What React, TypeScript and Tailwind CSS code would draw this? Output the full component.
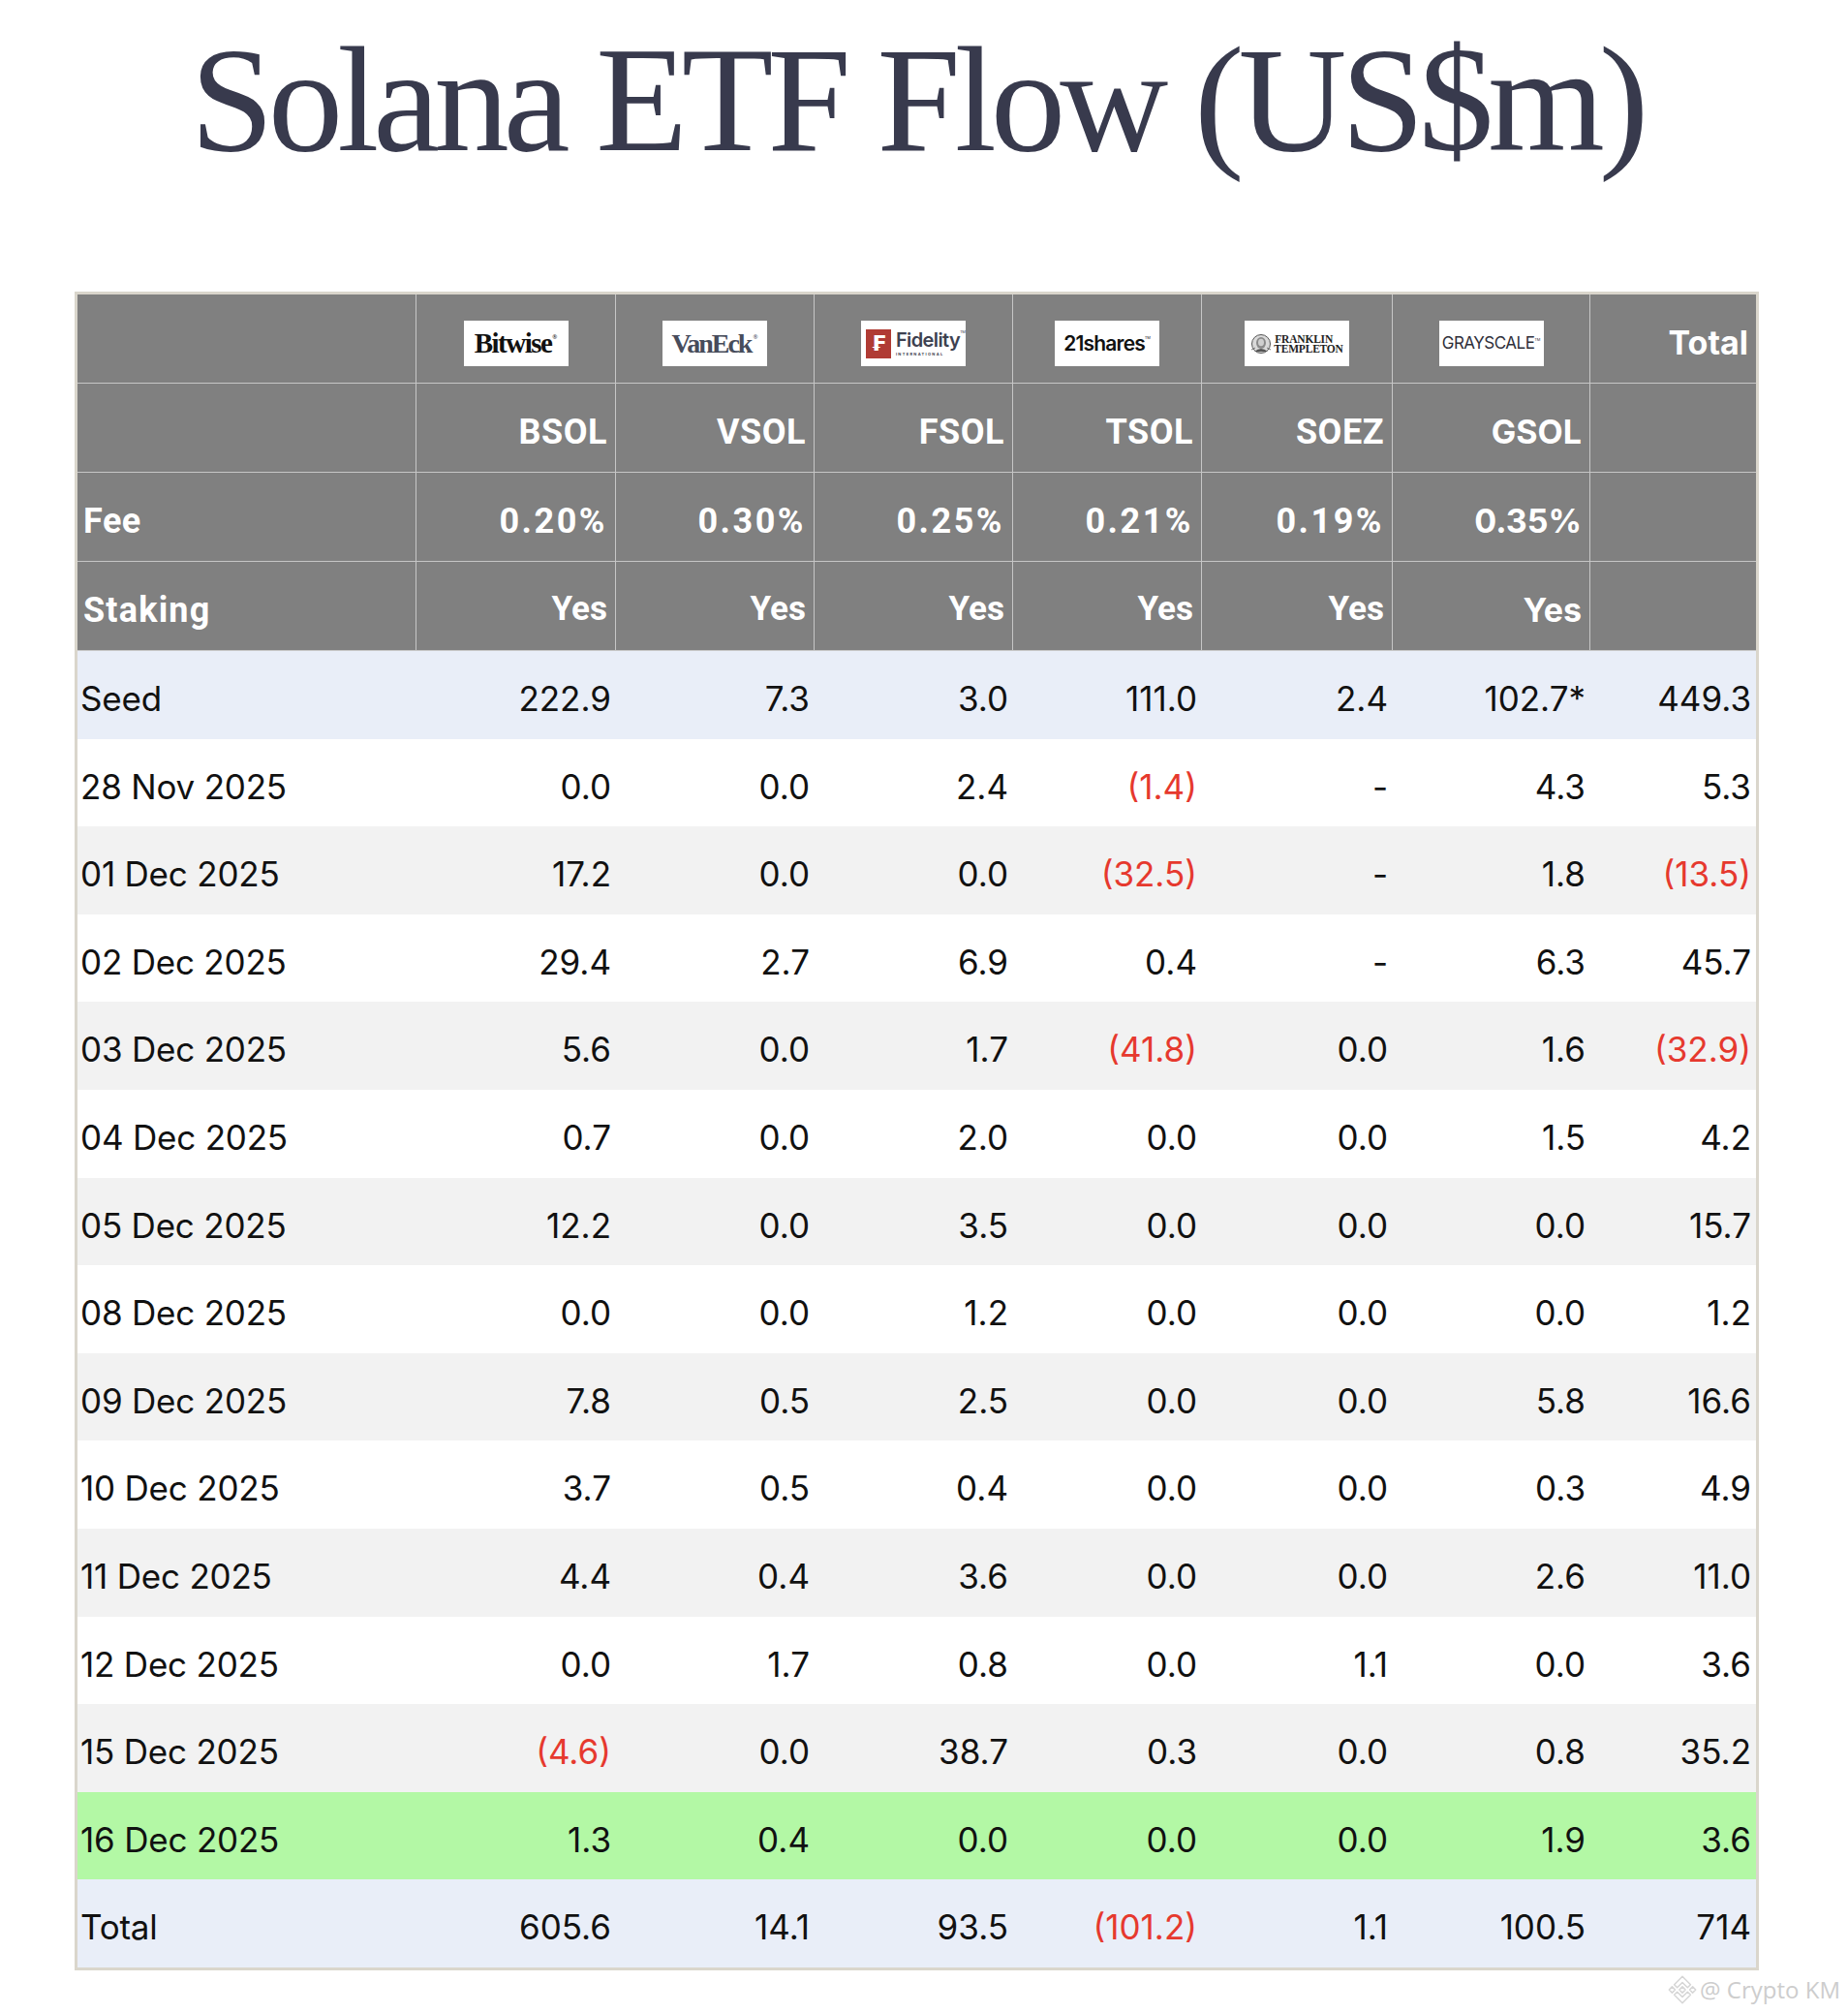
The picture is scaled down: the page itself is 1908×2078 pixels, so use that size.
import React from 'react';

type Cell = string;

const GRID = 'grid grid-cols-[350px_206px_205px_205px_195px_197px_204px_171px]';

const rows: { label: string; bg: string; values: Cell[] }[] = [
  { label: 'Seed', bg: 'bg-[#e9eef8]', values: ['222.9', '7.3', '3.0', '111.0', '2.4', '102.7*', '449.3'] },
  { label: '28 Nov 2025', bg: 'bg-white', values: ['0.0', '0.0', '2.4', '(1.4)', '-', '4.3', '5.3'] },
  { label: '01 Dec 2025', bg: 'bg-[#f2f2f2]', values: ['17.2', '0.0', '0.0', '(32.5)', '-', '1.8', '(13.5)'] },
  { label: '02 Dec 2025', bg: 'bg-white', values: ['29.4', '2.7', '6.9', '0.4', '-', '6.3', '45.7'] },
  { label: '03 Dec 2025', bg: 'bg-[#f2f2f2]', values: ['5.6', '0.0', '1.7', '(41.8)', '0.0', '1.6', '(32.9)'] },
  { label: '04 Dec 2025', bg: 'bg-white', values: ['0.7', '0.0', '2.0', '0.0', '0.0', '1.5', '4.2'] },
  { label: '05 Dec 2025', bg: 'bg-[#f2f2f2]', values: ['12.2', '0.0', '3.5', '0.0', '0.0', '0.0', '15.7'] },
  { label: '08 Dec 2025', bg: 'bg-white', values: ['0.0', '0.0', '1.2', '0.0', '0.0', '0.0', '1.2'] },
  { label: '09 Dec 2025', bg: 'bg-[#f2f2f2]', values: ['7.8', '0.5', '2.5', '0.0', '0.0', '5.8', '16.6'] },
  { label: '10 Dec 2025', bg: 'bg-white', values: ['3.7', '0.5', '0.4', '0.0', '0.0', '0.3', '4.9'] },
  { label: '11 Dec 2025', bg: 'bg-[#f2f2f2]', values: ['4.4', '0.4', '3.6', '0.0', '0.0', '2.6', '11.0'] },
  { label: '12 Dec 2025', bg: 'bg-white', values: ['0.0', '1.7', '0.8', '0.0', '1.1', '0.0', '3.6'] },
  { label: '15 Dec 2025', bg: 'bg-[#f2f2f2]', values: ['(4.6)', '0.0', '38.7', '0.3', '0.0', '0.8', '35.2'] },
  { label: '16 Dec 2025', bg: 'bg-[#b3f8a5]', values: ['1.3', '0.4', '0.0', '0.0', '0.0', '1.9', '3.6'] },
  { label: 'Total', bg: 'bg-[#e9eef8]', values: ['605.6', '14.1', '93.5', '(101.2)', '1.1', '100.5', '714'] },
];

const tickers = ['BSOL', 'VSOL', 'FSOL', 'TSOL', 'SOEZ', 'GSOL'];
const fees = ['0.20%', '0.30%', '0.25%', '0.21%', '0.19%', '0.35%'];

// header cell, last column has no right rule
function H({
  children,
  last,
  left,
  sf,
  tw = 'text-[35px]',
}: {
  children?: React.ReactNode;
  last?: boolean;
  left?: boolean;
  sf?: boolean;
  tw?: string;
}) {
  return (
    <div
      className={`flex h-[92px] items-center border-b border-[#c6c6c6] pt-2 font-bold text-white ${last ? '' : 'border-r'} ${left ? 'justify-start pl-[6px]' : 'justify-end pr-2'} ${sf ? "font-['Inter',sans-serif] text-[34px]" : `font-['Roboto',sans-serif] ${tw}`}`}
    >
      {children}
    </div>
  );
}

function LogoBox({ children }: { children: React.ReactNode }) {
  return <div className="flex h-[47px] w-[108px] items-center justify-center bg-white">{children}</div>;
}

function Bitwise() {
  return (
    <LogoBox>
      <span className="font-['Liberation_Serif',serif] text-[29px] font-bold leading-none tracking-[-1.5px] text-[#111]">Bitwise</span>
      <span className="mb-3 ml-[1px] text-[6px] text-[#111]">®</span>
    </LogoBox>
  );
}

function VanEck() {
  return (
    <LogoBox>
      <span className="font-['Liberation_Serif',serif] text-[28px] font-bold leading-none tracking-[-2px] text-[#474c5b]">VanEck</span>
      <span className="mb-3 ml-[2px] text-[6px] text-[#474c5b]">®</span>
    </LogoBox>
  );
}

function Fidelity() {
  return (
    <div className="flex h-[47px] w-[108px] items-center bg-white pl-[5px]">
      <div className="flex h-[30px] w-[29px] items-center justify-center bg-[#b03b34]">
        <span className="font-['DejaVu_Sans',sans-serif] text-[22px] font-bold leading-none text-white">₣</span>
      </div>
      <div className="ml-[5px] flex flex-col items-start">
        <div className="flex items-start">
          <span className="font-['Inter',sans-serif] text-[20px] font-semibold leading-none tracking-[-0.6px] text-[#3d4150]">Fidelity</span>
          <span className="text-[4px] leading-none text-[#3d4150]">TM</span>
        </div>
        <span className="mt-[3px] font-['Inter',sans-serif] text-[4px] font-bold leading-none tracking-[1.3px] text-[#3d4150]">INTERNATIONAL</span>
      </div>
    </div>
  );
}

function TwentyOne() {
  return (
    <LogoBox>
      <span className="font-['Inter',sans-serif] text-[21px] font-semibold leading-none tracking-[-0.8px] text-[#111]">21shares</span>
      <span className="mb-3 text-[4px] text-[#111]">TM</span>
    </LogoBox>
  );
}

function Franklin() {
  return (
    <LogoBox>
      <svg width="22" height="22" viewBox="0 0 22 22" className="mr-[2px]">
        <circle cx="11" cy="11" r="9.5" fill="#d9d9d9" stroke="#555" strokeWidth="1" />
        <ellipse cx="11" cy="10" rx="5" ry="6" fill="#8a8a8a" />
        <ellipse cx="11" cy="9.5" rx="3" ry="3.8" fill="#cfcfcf" />
        <path d="M4 19 Q11 13 18 19" fill="#555" />
        <path d="M1 17 L5 15 M17 15 L21 17" stroke="#777" strokeWidth="1" />
      </svg>
      <div className="flex flex-col font-['Liberation_Serif',serif] text-[11.5px] font-bold leading-[10px] tracking-[-0.2px] text-[#222]">
        <span className="pl-[1px]">FRANKLIN</span>
        <span>TEMPLETON</span>
      </div>
    </LogoBox>
  );
}

function Grayscale() {
  return (
    <LogoBox>
      <span className="font-['Inter',sans-serif] text-[17px] leading-none tracking-[-0.5px] text-[#2f2f3a]">GRAYSCALE</span>
      <span className="mb-2 text-[4px] text-[#2f2f3a]">TM</span>
    </LogoBox>
  );
}

function BinanceMark() {
  return (
    <svg width="30" height="30" viewBox="-6 -6 138.61 138.61" fill="none" stroke="#d6d6d6" strokeWidth="7" strokeLinejoin="round">
      <path d="M38.73 53.2 L63.3 28.63 L87.89 53.22 L102.19 38.92 L63.3 0 L24.42 38.9 Z" />
      <path d="M0 63.31 L14.3 49.01 L28.6 63.31 L14.3 77.61 Z" />
      <path d="M38.73 73.41 L63.3 97.98 L87.89 73.39 L102.19 87.68 L63.3 126.61 L24.42 87.7 Z" />
      <path d="M98.01 63.31 L112.31 49.01 L126.61 63.31 L112.31 77.61 Z" />
      <path d="M77.81 63.3 L63.3 48.78 L48.79 63.28 L63.3 77.79 Z" />
    </svg>
  );
}

export default function App() {
  const logos = [<Bitwise />, <VanEck />, <Fidelity />, <TwentyOne />, <Franklin />, <Grayscale />];
  return (
    <div className="min-h-[2078px] w-[1908px] bg-white">
      <div className="ml-[77px] w-[1739px] pt-[26px]">
        <h1 className="text-center font-['Liberation_Serif',serif] text-[155px] leading-none tracking-[-6px] text-[#383a4d]">
          Solana ETF Flow (US$m)
        </h1>
      </div>

      <div className="ml-[77px] mt-[120px] w-[1739px] border-[3px] border-[#dad6cc]">
        {/* header */}
        <div className="bg-[#808080]">
          <div className={GRID}>
            <H left />
            {logos.map((l, i) => (
              <div key={i} className="flex h-[92px] items-center justify-center border-r border-b border-[#c6c6c6] pt-[10px]">
                {l}
              </div>
            ))}
            <H last sf>
              Total
            </H>
          </div>
          <div className={GRID}>
            <H left />
            {tickers.map((t, i) => (
              <H key={t} sf={i === 5} tw="text-[36px] tracking-[0.5px]">
                {t}
              </H>
            ))}
            <H last />
          </div>
          <div className={GRID}>
            <H left tw="text-[36px] tracking-[0.5px]">
              Fee
            </H>
            {fees.map((f, i) => (
              <H key={f} sf={i === 5} tw="text-[36px] tracking-[2.5px]">
                {f}
              </H>
            ))}
            <H last />
          </div>
          <div className={GRID}>
            <H left tw="text-[36px] tracking-[1.2px]">
              Staking
            </H>
            {tickers.map((t, i) => (
              <H key={t} sf={i === 5}>
                Yes
              </H>
            ))}
            <H last />
          </div>
        </div>

        {/* body */}
        {rows.map(r => (
          <div key={r.label} className={`${GRID} h-[90.6px] ${r.bg} font-['Inter',sans-serif] text-[35px] text-[#111]`}>
            <div className="flex items-center pl-[3px] pt-2 tracking-[-0.2px]">{r.label}</div>
            {r.values.map((v, i) => (
              <div
                key={i}
                className={`flex items-center justify-end pr-[5px] pt-2 ${v.startsWith('(') ? 'text-[#e6392e]' : ''}`}
              >
                {v}
              </div>
            ))}
          </div>
        ))}
      </div>

      <div className="flex items-center justify-end pr-[8px] pt-[3px]">
        <BinanceMark />
        <span className="ml-[3px] font-['Open_Sans',sans-serif] text-[24px] leading-[34px] text-[#cdcdcd]">@ Crypto KM</span>
      </div>
    </div>
  );
}
